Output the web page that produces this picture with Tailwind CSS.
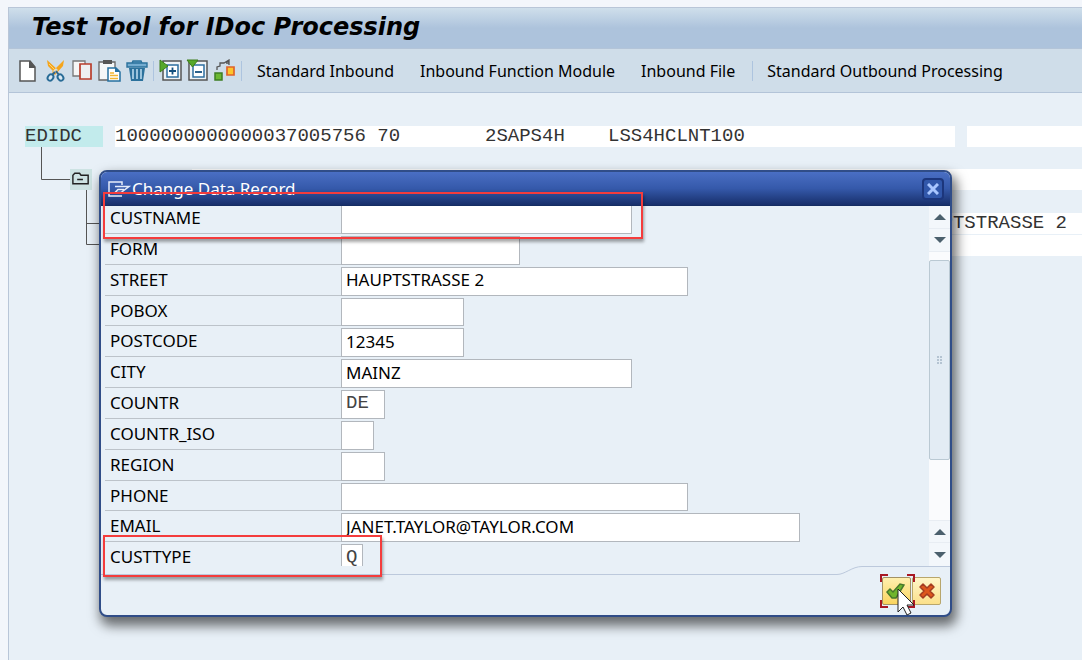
<!DOCTYPE html>
<html lang="en">
<head>
<meta charset="utf-8">
<title>Test Tool for IDoc Processing</title>
<script src="https://cdn.jsdelivr.net/npm/@tailwindcss/browser@4"></script>
</head>
<body class="relative flex min-h-screen flex-col overflow-hidden bg-[#f3f6fb] pt-[7px] pl-2 font-['Noto_Sans','DejaVu_Sans_Condensed',sans-serif] text-[17px] text-black">
<div class="flex grow flex-col border-t border-l border-[#b9c6d8] bg-[#e8f0f7]">
  <header class="flex h-[41px] items-center border-b border-[#b3c4d8] bg-linear-to-b from-[#cfdfeb] via-[#adc3dc] via-50% to-[#adc3dc] pb-[2px] pl-[23px]">
    <h1 class="font-['DejaVu_Sans','Noto_Sans',sans-serif] text-[24px] leading-7 font-bold italic">Test Tool for IDoc Processing</h1>
  </header>
  <nav class="flex h-11 items-center border-b border-[#b3c4d8] bg-[#cfdde9] pl-2 text-[16px] whitespace-nowrap" aria-label="Application toolbar">
    <div class="flex items-center gap-[3px]">
      <button aria-label="Create"><svg class="size-6" viewBox="0 0 24 24"><path d="M3 2h10l5 6v14H3z" fill="#fff" stroke="#555" stroke-width="1.5"/><path d="M12 2h1l5 6v1h-6z" fill="#555"/></svg></button>
      <button aria-label="Cut"><svg class="size-6" viewBox="0 0 24 24"><path d="M3 1l1 6 7 7 3-3zM20 1l-1 6-8 9-3-3z" fill="#f5a51c"/><path d="M5 5l8 8" stroke="#ffd474"/><path d="M12 12l3 4M11 13l-3 3" stroke="#33658a" stroke-width="2"/><ellipse cx="6.500" cy="18.500" rx="2.600" ry="3.300" transform="rotate(35 6.500 18.500)" fill="#d9e8f2" stroke="#286b96" stroke-width="2"/><ellipse cx="16.500" cy="18.500" rx="2.600" ry="3.300" transform="rotate(-35 16.500 18.500)" fill="#d9e8f2" stroke="#286b96" stroke-width="2"/></svg></button>
      <button aria-label="Copy"><svg class="size-6" viewBox="0 0 24 24"><path d="M2 2h12v15H2z" fill="#f6f6f6" stroke="#777" stroke-width="1.300"/><path d="M9 5h11v15H9z" fill="#eef0f2" stroke="#b93e2d" stroke-width="1.700"/></svg></button>
      <button aria-label="Paste"><svg class="size-6" viewBox="0 0 24 24"><path d="M1 3h16v18H1z" fill="#f5f7f8" stroke="#666" stroke-width="1.300"/><path d="M5 1h9v4H5z" fill="#555"/><path d="M10 9h8l4 4v9H10z" fill="#fff" stroke="#2670a0" stroke-width="1.500"/><path d="M17 8l5 5h-5z" fill="#2670a0"/><path d="M12 14h4M12 16.500h8M12 19.500h8" stroke="#f3b632" stroke-width="1.700"/></svg></button>
      <button aria-label="Delete"><svg class="size-6" viewBox="0 0 24 24"><path d="M7 4l1-2h8l1 2M2 4h20v4H2z" fill="#74acd0" stroke="#2b719c" stroke-width="1.400"/><path d="M4 9h16l-2 13H6z" fill="#2b719c"/><path d="M8 10v10M12 10v10M16 10v10" stroke="#a7cde4" stroke-width="1.800"/></svg></button>
    </div>
    <span class="mr-[5px] ml-1 h-5 w-px bg-[#adc4df]"></span>
    <div class="flex items-center gap-[3px]">
      <button aria-label="Expand"><svg class="size-6" viewBox="0 0 24 24"><path d="M4 2h18v19H4z" fill="#eef3f6" stroke="#555" stroke-width="1.500"/><path d="M8 6h11v12H8z" fill="#fff" stroke="#2e6fa0" stroke-width="1.500"/><path d="M10 12h7M13.500 8.500v7" stroke="#15507e" stroke-width="1.800"/><path d="M1 1l8 6-8 6z" fill="#56a829" stroke="#3d7d1b"/></svg></button>
      <button aria-label="Collapse"><svg class="size-6" viewBox="0 0 24 24"><path d="M3 2h18v19H3z" fill="#eef3f6" stroke="#555" stroke-width="1.500"/><path d="M7 6h11v12H7z" fill="#fff" stroke="#2e6fa0" stroke-width="1.500"/><path d="M9 13h7" stroke="#15507e" stroke-width="1.800"/><path d="M1 1h11L6.500 8z" fill="#56a829" stroke="#3d7d1b"/></svg></button>
      <button aria-label="Choose block"><svg class="size-6" viewBox="0 0 24 24"><path d="M4 11V8l3-1V4h4l5-3v5M13 4h3" fill="none" stroke="#555" stroke-width="1.300"/><path d="M2 14h7v7H2z" fill="#6bb832" stroke="#3e7d23" stroke-width="1.500"/><path d="M14 8h7v8h-7z" fill="#fdc52c" stroke="#e0632a" stroke-width="1.700"/></svg></button>
    </div>
    <span class="mx-1 h-5 w-px bg-[#adc4df]"></span>
    <button class="ml-[11px]">Standard Inbound</button>
    <button class="ml-[26px]">Inbound Function Module</button>
    <button class="ml-[26px]">Inbound File</button>
    <span class="mr-[14px] ml-[17px] h-5 w-px bg-[#adc4df]"></span>
    <button>Standard Outbound Processing</button>
  </nav>
  <main class="relative grow pt-[33px] pl-4 font-['Liberation_Mono','Courier_New',monospace] text-[19px] leading-[21px] whitespace-nowrap text-[#333]">
    <div class="flex gap-3">
      <div class="w-[78px] bg-[#c2ebec]">EDIDC</div>
      <div class="flex w-[840px] bg-white"><span class="w-[370px]">1000000000000037005756 70</span><span class="w-[123px]">2SAPS4H</span><span>LSS4HCLNT100</span></div>
      <div class="grow bg-white"></div>
    </div>
    <div class="mt-[22px] ml-[45px] flex">
      <button class="h-[21px] w-[22px] bg-[#cde3e3]" aria-label="Collapse segment"><svg class="h-[21px] w-[22px]" viewBox="0 0 22 22" fill="none" stroke="#222" stroke-width="1.500"><path d="M2.500 15.500V6.500l2-2h5l1.500 2h7.500v9zM7 11h6"/></svg></button>
      <div class="ml-[100px] grow bg-white"></div>
    </div>
    <div class="mt-[23px] ml-[167px] bg-white pr-[15px] text-right">HAUPTSTRASSE 2</div>
    <div class="mt-px ml-[167px] h-[21px] bg-white"></div>
    <svg class="absolute top-[54px] left-8 h-[100px] w-[60px]" viewBox="0 0 60 100" fill="none" stroke="#555"><path d="M.5 0v32.500H29M45.500 43v54.500H60M45.500 76.500H60"/></svg>
  </main>
</div>

<section role="dialog" aria-labelledby="dlg" class="absolute top-[170px] left-[99px] flex h-[447px] w-[853px] flex-col overflow-visible rounded-lg border-2 border-[#304d88] bg-[#e8f0f7] shadow-[3px_7px_12px_2px_rgba(0,0,0,0.55)]">
  <header class="flex h-[34px] shrink-0 items-center rounded-t-md border-b border-[#152d63] bg-linear-to-b from-[#4a6fc4] via-[#3559aa] to-[#182f6b] pr-[6px] pl-[7px] text-white">
    <svg class="h-5 w-6" viewBox="0 0 24 20" fill="none" stroke="#e6ecfa" stroke-width="1.500"><path d="M14 6V3H1v14h13M7 7.500h14L13 13.500H7l3-3h6"/></svg>
    <h2 id="dlg" class="grow text-[17px]">Change Data Record</h2>
    <button class="flex size-[22px] items-center justify-center rounded border-2 border-[#1c367c] bg-[#3157aa]" aria-label="Close"><svg class="size-3 shrink-0" viewBox="0 0 12 12"><path d="M1 1l10 10M11 1L1 11" stroke="#a9c6ff" stroke-width="3"/></svg></button>
  </header>
  <div class="flex h-[360px] shrink-0">
    <div class="h-[360px] grow overflow-hidden pl-1">
      <form class="-mt-[3px] grid h-[370px] grid-rows-12 [&>div]:flex [&>div]:min-h-0 [&_label]:flex [&_label]:w-[236px] [&_label]:items-center [&_label]:border-b [&_label]:border-[#bcc3ca] [&_label]:pl-[5px] [&_input]:mt-[2px] [&_input]:min-h-0 [&_input]:border [&_input]:border-[#b2b7bd] [&_input]:bg-white [&_input]:px-1 [&_input]:pb-[2px] [&_input]:outline-none">
        <div><label for="f1">CUSTNAME</label><input id="f1" class="w-[291px]"></div>
        <div><label for="f2">FORM</label><input id="f2" class="w-[179px]"></div>
        <div><label for="f3">STREET</label><input id="f3" class="w-[347px]" value="HAUPTSTRASSE 2"></div>
        <div><label for="f4">POBOX</label><input id="f4" class="w-[123px]"></div>
        <div><label for="f5">POSTCODE</label><input id="f5" class="w-[123px]" value="12345"></div>
        <div><label for="f6">CITY</label><input id="f6" class="w-[291px]" value="MAINZ"></div>
        <div><label for="f7">COUNTR</label><input id="f7" class="w-11 font-['Liberation_Mono','Courier_New',monospace] text-[19px] text-[#444]" value="DE"></div>
        <div><label for="f8">COUNTR_ISO</label><input id="f8" class="w-[33px]"></div>
        <div><label for="f9">REGION</label><input id="f9" class="w-11"></div>
        <div><label for="f10">PHONE</label><input id="f10" class="w-[347px]"></div>
        <div><label for="f11">EMAIL</label><input id="f11" class="w-[459px]" value="JANET.TAYLOR@TAYLOR.COM"></div>
        <div><label for="f12">CUSTTYPE</label><input id="f12" class="w-[22px] font-['Liberation_Mono','Courier_New',monospace] text-[19px] text-[#444]" value="Q"></div>
      </form>
    </div>
    <div class="flex w-[21px] flex-col bg-[#fafbfd]">
      <button class="flex h-[23px] items-center justify-center border-b border-[#e8edf3] bg-[#f3f7fb]" aria-label="Scroll up"><svg class="h-[6px] w-[12px]" viewBox="0 0 10 6" preserveAspectRatio="none"><path d="M0 6L5 0l5 6z" fill="#4b606d"/></svg></button>
      <button class="flex h-[23px] items-center justify-center border-b border-[#e8edf3] bg-[#f3f7fb]" aria-label="Scroll line down"><svg class="h-[6px] w-[12px]" viewBox="0 0 10 6" preserveAspectRatio="none"><path d="M0 0l5 6 5-6z" fill="#4b606d"/></svg></button>
      <div class="mt-2 flex h-[200px] items-center justify-center rounded-xs border border-[#bac9d3] bg-[#e3ecf4]"><svg class="h-2 w-[6px]" viewBox="0 0 6 8" fill="#b5c4d2"><path d="M0 0h2v2H0zM3 0h2v2H3zM0 3h2v2H0zM3 3h2v2H3zM0 6h2v2H0zM3 6h2v2H3z"/></svg></div>
      <button class="mt-auto flex h-[23px] items-center justify-center border-y border-[#e8edf3] bg-[#f3f7fb]" aria-label="Scroll line up"><svg class="h-[6px] w-[12px]" viewBox="0 0 10 6" preserveAspectRatio="none"><path d="M0 6L5 0l5 6z" fill="#4b606d"/></svg></button>
      <button class="flex h-[23px] items-center justify-center bg-[#f3f7fb]" aria-label="Scroll down"><svg class="h-[6px] w-[12px]" viewBox="0 0 10 6" preserveAspectRatio="none"><path d="M0 0l5 6 5-6z" fill="#4b606d"/></svg></button>
    </div>
  </div>
  <footer class="relative flex grow items-start justify-end pt-[11px] pr-[9px]">
    <svg class="absolute top-0 left-0 h-[10px] w-full" viewBox="0 0 849 10" preserveAspectRatio="none" fill="none" stroke="#bcc9dc"><path d="M0 8.500h736c8 0 15-8 25-8h88"/></svg>
    <button class="flex h-[28px] w-[29px] items-center justify-center rounded-xs border border-[#a39264] bg-linear-to-b from-[#fff0ae] to-[#fad45c] pr-1" aria-label="Continue"><svg class="size-5 shrink-0" viewBox="0 0 20 20"><path d="M2 11l3-3 3 3 7-8 4 1-8 13H7z" fill="#70b52c" stroke="#47792b" stroke-width="1.500"/></svg></button>
    <button class="ml-px flex h-[28px] w-[29px] items-center justify-center rounded-xs border border-[#b8a66c] bg-linear-to-b from-[#fff6c8] to-[#fbe08a]" aria-label="Cancel"><svg class="size-[18px] shrink-0" viewBox="0 0 18 18"><path d="M5 2l4 4 4-4 3 3-4 4 4 4-3 3-4-4-4 4-3-3 4-4-4-4z" fill="#dd571c" stroke="#a33c20" stroke-width="1.500" stroke-linejoin="round"/></svg></button>
    <svg class="absolute top-2 right-[34px] h-[42px] w-[36px]" viewBox="0 0 36 42"><path d="M8 1H1v7M27 1h7v7M1 26v7h7M27 33h7v-7" fill="none" stroke="#a81824" stroke-width="2"/><path d="M18 15v23l5-5 4 8 4-2-4-8h7z" fill="#fff" stroke="#222"/></svg>
  </footer>
</section>

<div class="pointer-events-none absolute top-[192px] left-[103px] h-[47px] w-[540px] border-2 border-[#f43c3c] shadow-[1px_3px_3px_rgba(0,0,0,0.35)]"></div>
<div class="pointer-events-none absolute top-[535px] left-[103px] h-[42px] w-[279px] border-2 border-[#f43c3c] shadow-[1px_3px_3px_rgba(0,0,0,0.35)]"></div>
</body>
</html>
